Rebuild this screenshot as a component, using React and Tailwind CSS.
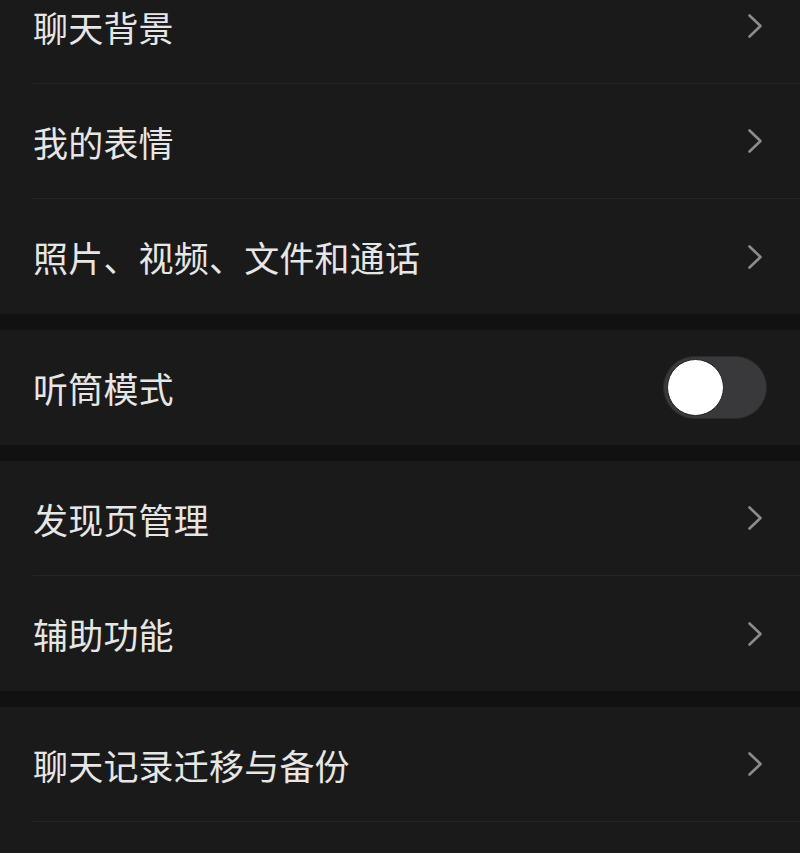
import React from "react";

function Chevron() {
  return (
    <svg viewBox="0 0 16 26" className="w-[16px] h-[26px]" fill="none">
      <path
        d="M2.5 2.5L13.5 13L2.5 23.5"
        stroke="#8c8c8c"
        strokeWidth="2.6"
        strokeLinecap="round"
        strokeLinejoin="round"
      />
    </svg>
  );
}

function Toggle() {
  return (
    <div className="w-[104px] h-[63px] rounded-full bg-[#39393c] border border-[#2a2a2c] p-[3px] flex items-center">
      <div className="w-[57px] h-[57px] rounded-full bg-white border border-[#222]" />
    </div>
  );
}

function Row({ label, last, right }) {
  return (
    <div className="pl-[33px] bg-[#1a1a1a]">
      <div
        className={
          "flex items-center justify-between h-[115px] pr-[37px] " +
          (last ? "" : "border-b border-[#262626]")
        }
      >
        <span className="text-[35px] text-[#e6e6e6] tracking-[0.2px] leading-none">
          {label}
        </span>
        {right || <Chevron />}
      </div>
    </div>
  );
}

function Gap() {
  return <div className="h-[16px] bg-[#111111]" />;
}

export default function App() {
  return (
    <div
      className="w-[800px] h-[853px] overflow-hidden bg-[#1a1a1a]"
      style={{ fontFamily: '"Noto Sans CJK SC", "Noto Sans", sans-serif' }}
    >
      <div className="-mt-[31px]">
        {/* Group 1 */}
        <Row label="聊天背景" />
        <Row label="我的表情" />
        <Row label="照片、视频、文件和通话" last />
        <Gap />

        {/* Group 2 */}
        <div className="pl-[33px] bg-[#1a1a1a]">
          <div className="flex items-center justify-between h-[115px] pr-[33px]">
            <span className="text-[35px] text-[#e6e6e6] tracking-[0.2px] leading-none">
              听筒模式
            </span>
            <Toggle />
          </div>
        </div>
        <Gap />

        {/* Group 3 */}
        <Row label="发现页管理" />
        <Row label="辅助功能" last />
        <Gap />

        {/* Group 4 */}
        <Row label="聊天记录迁移与备份" />
        <div className="h-[115px] bg-[#1a1a1a]" />
      </div>
    </div>
  );
}
